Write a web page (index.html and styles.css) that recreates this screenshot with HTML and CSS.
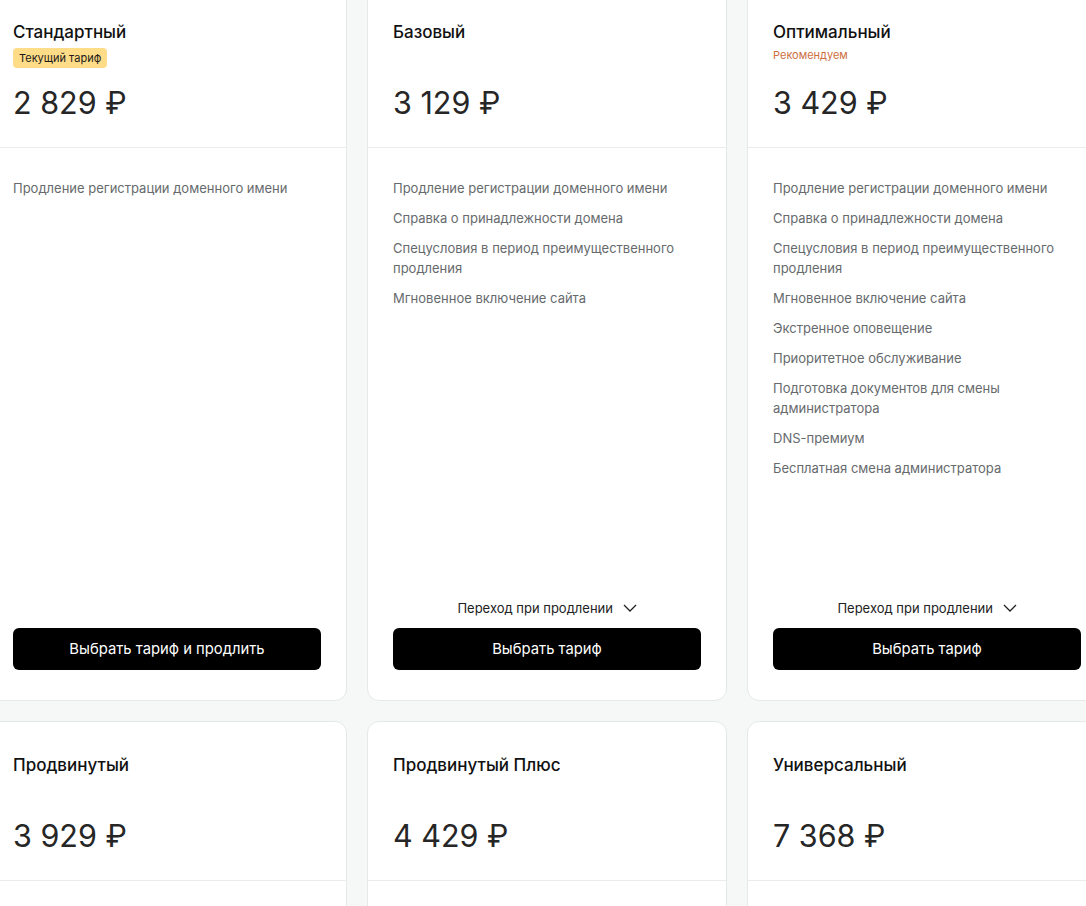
FILE: index.html
```html
<!DOCTYPE html>
<html lang="ru">
<head>
<meta charset="utf-8">
<title>Тарифы</title>
<link rel="stylesheet" href="styles.css">
</head>
<body>
<div class="plans">
  <section class="card">
    <div class="card-head">
      <h3 class="title">Стандартный</h3>
      <div class="tag-slot"><span class="badge">Текущий тариф</span></div>
      <div class="price">2 829 ₽</div>
    </div>
    <ul class="features">
      <li>Продление регистрации доменного имени</li>
    </ul>
    <div class="card-foot">
      <button class="btn">Выбрать тариф и продлить</button>
    </div>
  </section>

  <section class="card">
    <div class="card-head">
      <h3 class="title">Базовый</h3>
      <div class="tag-slot"></div>
      <div class="price">3 129 ₽</div>
    </div>
    <ul class="features">
      <li>Продление регистрации доменного имени</li>
      <li>Справка о принадлежности домена</li>
      <li>Спецусловия в период преимущественного продления</li>
      <li>Мгновенное включение сайта</li>
    </ul>
    <div class="card-foot">
      <div class="transition">Переход при продлении
        <svg class="chev" width="14" height="8" viewBox="0 0 14 8"><path d="M1 1l6 6 6-6" fill="none" stroke="#222" stroke-width="1.3"/></svg>
      </div>
      <button class="btn">Выбрать тариф</button>
    </div>
  </section>

  <section class="card">
    <div class="card-head">
      <h3 class="title">Оптимальный</h3>
      <div class="tag-slot"><span class="recommend">Рекомендуем</span></div>
      <div class="price">3 429 ₽</div>
    </div>
    <ul class="features">
      <li>Продление регистрации доменного имени</li>
      <li>Справка о принадлежности домена</li>
      <li>Спецусловия в период преимущественного продления</li>
      <li>Мгновенное включение сайта</li>
      <li>Экстренное оповещение</li>
      <li>Приоритетное обслуживание</li>
      <li>Подготовка документов для смены администратора</li>
      <li>DNS-премиум</li>
      <li>Бесплатная смена администратора</li>
    </ul>
    <div class="card-foot">
      <div class="transition">Переход при продлении
        <svg class="chev" width="14" height="8" viewBox="0 0 14 8"><path d="M1 1l6 6 6-6" fill="none" stroke="#222" stroke-width="1.3"/></svg>
      </div>
      <button class="btn">Выбрать тариф</button>
    </div>
  </section>

  <section class="card">
    <div class="card-head">
      <h3 class="title">Продвинутый</h3>
      <div class="tag-slot"></div>
      <div class="price">3 929 ₽</div>
    </div>
  </section>

  <section class="card">
    <div class="card-head">
      <h3 class="title">Продвинутый Плюс</h3>
      <div class="tag-slot"></div>
      <div class="price">4 429 ₽</div>
    </div>
  </section>

  <section class="card">
    <div class="card-head">
      <h3 class="title">Универсальный</h3>
      <div class="tag-slot"></div>
      <div class="price">7 368 ₽</div>
    </div>
  </section>
</div>
</body>
</html>
```

FILE: styles.css
```css
html, body {
  margin: 0;
  padding: 0;
  background: #f6f8f8;
  font-family: Inter, "Noto Sans", "Liberation Sans", sans-serif;
  color: #111;
  overflow: hidden;
}

.plans {
  display: grid;
  grid-template-columns: repeat(3, 360px);
  gap: 20px;
  margin: -12px 0 0 -13px;
}

.card {
  background: #fff;
  border: 1px solid #e5e9e9;
  border-radius: 12px;
  display: flex;
  flex-direction: column;
  min-height: 713px;
  box-sizing: border-box;
}

.card-head {
  padding: 31px 25px 24px;
  border-bottom: 1px solid #e8ecec;
}

.title {
  margin: 0;
  font-size: 17px;
  line-height: 24px;
  font-weight: 500;
  color: #111;
}

.tag-slot {
  height: 20px;
  margin-top: 4px;
  display: flex;
  align-items: center;
}

.badge {
  display: inline-block;
  background: #ffdc87;
  color: #1a1a1a;
  font-size: 11px;
  line-height: 20px;
  padding: 0 6px;
  border-radius: 4px;
}

.recommend {
  color: #cc6f3f;
  font-size: 11px;
  line-height: 16px;
  margin-top: -6px;
}

.price {
  margin-top: 15px;
  font-size: 30.5px;
  line-height: 40px;
  color: #262626;
  font-weight: 400;
}

.features {
  list-style: none;
  margin: 0;
  padding: 30px 25px 0;
  display: flex;
  flex-direction: column;
  gap: 10px;
}

.features li {
  font-size: 13px;
  line-height: 20px;
  color: #666a6d;
}

.card-foot {
  margin-top: auto;
  padding: 30px 25px 30px;
  display: flex;
  flex-direction: column;
}

.transition {
  text-align: center;
  font-size: 13px;
  line-height: 20px;
  color: #222;
  margin-bottom: 10px;
}

.chev {
  margin-left: 6px;
  vertical-align: 1px;
}

.btn {
  height: 42px;
  border: 0;
  border-radius: 6px;
  background: #000;
  color: #fff;
  font-family: inherit;
  font-size: 14.8px;
  cursor: pointer;
}
```
